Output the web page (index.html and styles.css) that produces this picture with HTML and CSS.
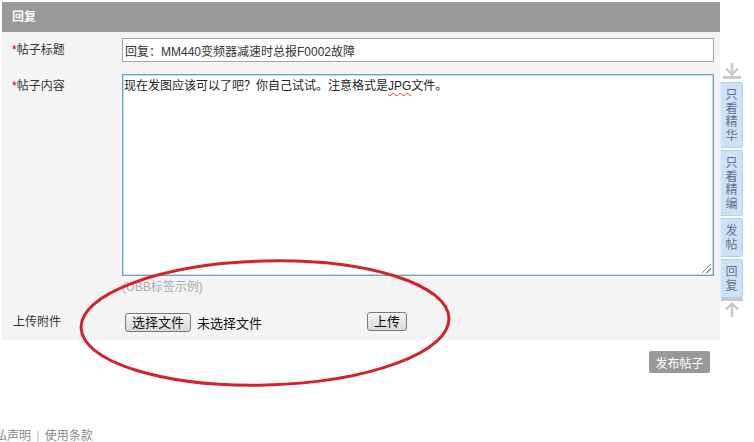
FILE: index.html
```html
<!DOCTYPE html>
<html lang="zh-CN">
<head>
    <meta charset="UTF-8">
    <title>回复</title>
    <link rel="stylesheet" href="styles.css">
</head>
<body>
    <div class="page">
        <div class="main">
            <div class="reply-box">
                <div class="reply-head">回复</div>
                <div class="reply-body">
                    <div class="form-row">
                        <label class="form-label"><span class="req">*</span>帖子标题</label>
                        <input class="text-input" type="text" value="回复：MM440变频器减速时总报F0002故障">
                    </div>
                    <div class="form-row row-content">
                        <label class="form-label"><span class="req">*</span>帖子内容</label>
                        <div class="field">
                            <div class="content-box">现在发图应该可以了吧？你自己试试。注意格式是<span class="typo">JPG</span>文件。<span class="grip"></span></div>
                            <div class="ubb-tip">(UBB标签示例)</div>
                        </div>
                    </div>
                    <div class="form-row row-upload">
                        <label class="form-label">上传附件</label>
                        <div class="upload">
                            <div class="file-picker">
                                <button class="file-btn">选择文件</button>
                                <span class="file-name">未选择文件</span>
                            </div>
                            <button class="file-btn">上传</button>
                        </div>
                    </div>
                </div>
            </div>
            <div class="submit-bar">
                <button class="btn-submit">发布帖子</button>
            </div>
            <div class="footer">隐私声明 <span class="sep">|</span> 使用条款</div>
        </div>

        <div class="side-tools">
            <svg class="arrow" width="20" height="16" viewBox="0 0 20 16">
                <path d="M10 0 V11 M4 5.5 L10 11.5 L16 5.5" fill="none" stroke="#c9c9c9" stroke-width="2.4"/>
                <rect x="1" y="13" width="18" height="3" fill="#c9c9c9"/>
            </svg>
            <a class="side-tab" href="#"><span>只看精华</span></a>
            <a class="side-tab" href="#"><span>只看精编</span></a>
            <a class="side-tab" href="#"><span>发帖</span></a>
            <a class="side-tab" href="#"><span>回复</span></a>
            <svg class="arrow arrow-up" width="22" height="19" viewBox="0 0 22 19">
                <rect x="0" y="0" width="22" height="3" fill="#c9c9c9"/>
                <path d="M11 19 V7 M5 11.5 L11 5.5 L17 11.5" fill="none" stroke="#c9c9c9" stroke-width="2.4"/>
            </svg>
        </div>

        <svg class="annotation" width="376" height="132" viewBox="0 0 376 132">
            <ellipse cx="188" cy="66" rx="184" ry="62" transform="rotate(-1.5 188 66)" fill="none" stroke="#d3222c" stroke-width="3"/>
        </svg>
    </div>
</body>
</html>
```

FILE: styles.css
```css
body {
    margin: 0;
    font-family: "Liberation Sans", "Noto Sans CJK SC", sans-serif;
    font-size: 12px;
    color: #333;
    background-color: #ffffff;
}
.page {
    position: relative;
    display: flex;
    align-items: flex-start;
    padding: 2px 0 0 2px;
}
.main {
    width: 718px;
}
.reply-head {
    height: 30px;
    line-height: 30px;
    padding-left: 10px;
    background-color: #999999;
    color: #ffffff;
    font-weight: bold;
}
.reply-body {
    background-color: #f4f4f4;
    padding: 6px 6px 6px 0;
    display: flex;
    flex-direction: column;
    gap: 12px;
}
.form-row {
    display: grid;
    grid-template-columns: 120px 1fr;
    align-items: center;
}
.form-label {
    padding-left: 10px;
    line-height: 24px;
}
.req {
    color: #c00;
}
.text-input {
    box-sizing: border-box;
    height: 24px;
    width: 100%;
    margin: 0;
    padding: 0 2px;
    border: 1px solid #a5a5a5;
    background: #ffffff;
    font-family: inherit;
    font-size: 12px;
    color: #333;
    outline: none;
}
.row-content {
    align-items: start;
}
.content-box {
    position: relative;
    box-sizing: border-box;
    height: 202px;
    padding: 3px 1px;
    line-height: 16px;
    background: #ffffff;
    border: 1px solid #6aa3c4;
    box-shadow: inset 0 0 0 1px #c4dcea;
    color: #222;
}
.typo {
    text-decoration: underline wavy #e03030;
    text-decoration-thickness: 1px;
    text-underline-offset: 2px;
}
.grip {
    position: absolute;
    right: 2px;
    bottom: 2px;
    width: 9px;
    height: 9px;
    background: linear-gradient(135deg, transparent 45%, #8a8a8a 45%, #8a8a8a 53%, transparent 53%, transparent 70%, #8a8a8a 70%, #8a8a8a 78%, transparent 78%);
}
.ubb-tip {
    margin-top: 3px;
    line-height: 16px;
    color: #aaaaaa;
}
.row-upload {
    margin-top: 3px;
}
.row-upload .form-label {
    padding-left: 11px;
}
.upload {
    display: flex;
    align-items: center;
    height: 24px;
}
.file-picker {
    width: 242px;
    display: flex;
    align-items: center;
    gap: 6px;
    padding-left: 3px;
}
.file-btn {
    height: 19px;
    padding: 0 6px;
    border: 1px solid #7a7a7a;
    border-radius: 3px;
    background: linear-gradient(#f4f4f4, #d9d9d9);
    font-family: inherit;
    font-size: 13px;
    line-height: 17px;
    color: #111;
}
.upload > .file-btn {
    margin-top: -2px;
}
.file-name {
    font-size: 13px;
    color: #111;
}
.submit-bar {
    display: flex;
    justify-content: flex-end;
    padding: 11px 10px 0 0;
}
.btn-submit {
    height: 22px;
    width: 61px;
    padding: 0;
    border: none;
    border-radius: 2px;
    background-color: #999999;
    color: #ffffff;
    font-family: inherit;
    font-size: 12px;
}
.footer {
    margin: 55px 0 0 -19px;
    line-height: 16px;
    color: #888888;
}
.sep {
    color: #bbbbbb;
    padding: 0 2px;
}
.side-tools {
    width: 23px;
    margin-top: 61px;
    display: flex;
    flex-direction: column;
    align-items: center;
    gap: 2px;
}
.side-tools .arrow {
    display: block;
    margin-bottom: 1px;
}
.side-tools .arrow-up {
    margin: -2px 0 0 0;
}
.side-tab {
    box-sizing: border-box;
    width: 23px;
    padding: 6px 0 4px;
    display: flex;
    justify-content: center;
    font-size: 12px;
    line-height: 13.5px;
    color: #5e718d;
    text-decoration: none;
    background-color: #cde1f8;
    border: 1px solid #b4cfee;
    border-left-color: #e4effc;
    border-radius: 0 3px 3px 0;
}
.side-tab span {
    width: 12px;
    word-break: break-all;
}
.annotation {
    position: absolute;
    left: 77px;
    top: 257px;
}
```
